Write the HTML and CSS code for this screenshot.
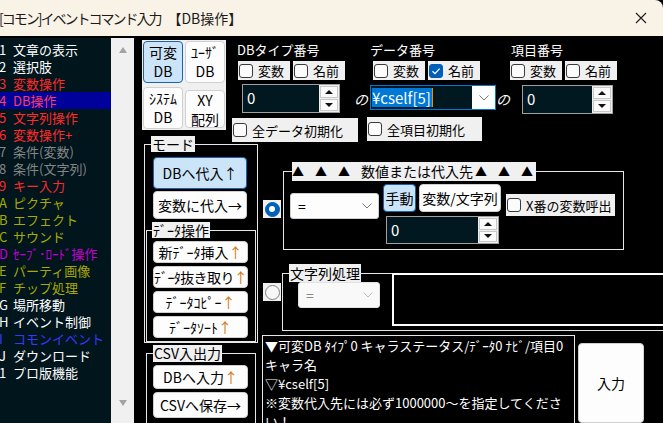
FILE: index.html
```html
<!DOCTYPE html>
<html lang="ja">
<head>
  <meta charset="UTF-8" />
  <title>[コモン]イベントコマンド入力 【DB操作】</title>
  <link rel="stylesheet" href="styles.css">
</head>
<body>

  <!-- title bar -->
  <div class="titlebar">
    <span class="title"><span class="title-main">[コモン]イベントコマンド入力</span>　【DB操作】</span>
    <svg class="close" viewBox="0 0 12 12"><path d="M1 1L11 11M11 1L1 11" stroke="#1b1b1b" stroke-width="1.1" fill="none"/></svg>
  </div>

  <div class="main">

    <!-- command list -->
    <div class="cmdlist">
      <ul class="list">
        <li class="c-white"><span class="num">1</span>文章の表示</li>
        <li class="c-white"><span class="num">2</span>選択肢</li>
        <li class="c-red"><span class="num">3</span>変数操作</li>
        <li class="c-sel"><span class="num">4</span>DB操作</li>
        <li class="c-red"><span class="num">5</span>文字列操作</li>
        <li class="c-red"><span class="num">6</span>変数操作+</li>
        <li class="c-gray"><span class="num">7</span>条件(変数)</li>
        <li class="c-gray"><span class="num">8</span>条件(文字列)</li>
        <li class="c-red"><span class="num">9</span>キー入力</li>
        <li class="c-olive"><span class="num">A</span>ピクチャ</li>
        <li class="c-olive"><span class="num">B</span>エフェクト</li>
        <li class="c-olive"><span class="num">C</span>サウンド</li>
        <li class="c-purple"><span class="num">D</span>ｾｰﾌﾞ･ﾛｰﾄﾞ操作</li>
        <li class="c-olive"><span class="num">E</span>パーティ画像</li>
        <li class="c-olive"><span class="num">F</span>チップ処理</li>
        <li class="c-white"><span class="num">G</span>場所移動</li>
        <li class="c-white"><span class="num">H</span>イベント制御</li>
        <li class="c-blue"><span class="num">I</span>コモンイベント</li>
        <li class="c-white"><span class="num">J</span>ダウンロード</li>
        <li class="c-white"><span class="num">1</span>プロ版機能</li>
      </ul>
      <div class="scroll">
        <span class="arr up"></span>
        <span class="arr down"></span>
      </div>
    </div>

    <div class="form">

      <div class="toprow">
        <div class="dbsel">
          <button class="btn on">可変<br>DB</button>
          <button class="btn">ﾕｰｻﾞ<br>DB</button>
          <button class="btn">ｼｽﾃﾑ<br>DB</button>
          <button class="btn xy">XY<br>配列</button>
        </div>

        <div class="params">
          <div class="lbl c1">DBタイプ番号</div>
          <div class="lbl c2">データ番号</div>
          <div class="lbl c3">項目番号</div>

          <div class="chks c1">
            <span class="chk"><span class="box"></span>変数</span>
            <span class="chk"><span class="box"></span>名前</span>
          </div>
          <div class="chks c2">
            <span class="chk"><span class="box"></span>変数</span>
            <span class="chk"><span class="box on"><svg viewBox="0 0 12 12"><path d="M2.5 6.2L5 8.6L9.6 3.6" stroke="#fff" stroke-width="1.3" fill="none"/></svg></span>名前</span>
          </div>
          <div class="chks c3">
            <span class="chk"><span class="box"></span>変数</span>
            <span class="chk"><span class="box"></span>名前</span>
          </div>

          <div class="spin spin-type c1">
            <span class="val">0</span>
            <span class="sbtns"><span class="sb"><i class="t-up"></i></span><span class="sb"><i class="t-down"></i></span></span>
          </div>
          <div class="no no1">の</div>
          <div class="combo focus c2">
            <span class="ctext"><span class="hl">¥cself[5]</span><span class="caret"></span></span>
            <span class="cdrop"><svg viewBox="0 0 10 6"><path d="M0.5 0.5L5 5L9.5 0.5" stroke="#777" fill="none"/></svg></span>
          </div>
          <div class="no no2">の</div>
          <div class="spin spin-item c3">
            <span class="val">0</span>
            <span class="sbtns"><span class="sb"><i class="t-up"></i></span><span class="sb"><i class="t-down"></i></span></span>
          </div>

          <span class="chk init init-data c1"><span class="box"></span>全データ初期化</span>
          <span class="chk init init-item c2"><span class="box"></span>全項目初期化</span>
        </div>
      </div>

      <div class="botrow">

        <div class="modes">
          <fieldset class="grp mode">
            <legend class="glbl">モード</legend>
            <button class="btn mbtn b1 on">DBへ代入↑</button>
            <button class="btn mbtn b2">変数に代入→</button>
            <fieldset class="grp sub">
              <legend class="glbl">ﾃﾞｰﾀ操作</legend>
              <button class="btn dbtn">新ﾃﾞｰﾀ挿入<span class="ar">↑</span></button>
              <button class="btn dbtn tight">ﾃﾞｰﾀ抜き取り<span class="ar">↑</span></button>
              <button class="btn dbtn">ﾃﾞｰﾀｺﾋﾟｰ<span class="ar">↑</span></button>
              <button class="btn dbtn">ﾃﾞｰﾀｿｰﾄ<span class="ar">↑</span></button>
            </fieldset>
          </fieldset>
          <fieldset class="grp csv">
            <legend class="glbl">CSV入出力</legend>
            <button class="btn dbtn csv1">DBへ入力<span class="ar">↑</span></button>
            <button class="btn dbtn csv2">CSVへ保存→</button>
          </fieldset>
        </div>

        <div class="work">
          <div class="opt">
            <span class="radio r1"><span class="rdot on"></span></span>
            <fieldset class="grp num">
              <legend class="glbl tlbl"><span class="tri">▲</span><span class="tri">▲</span><span class="tri">▲</span>数値または代入先<span class="tri r first">▲</span><span class="tri r">▲</span><span class="tri r">▲</span></legend>
              <div class="numbody">
                <div class="combo eq">
                  <span class="eqtext">=</span>
                  <span class="cdrop"><svg viewBox="0 0 10 6"><path d="M0.5 0.5L5 5L9.5 0.5" stroke="#777" fill="none"/></svg></span>
                </div>
                <div class="mid">
                  <div class="mbtns">
                    <button class="btn on manual">手動</button>
                    <button class="btn varstr">変数/文字列</button>
                  </div>
                  <div class="spin spin-num">
                    <span class="val">0</span>
                    <span class="sbtns"><span class="sb"><i class="t-up"></i></span><span class="sb"><i class="t-down"></i></span></span>
                  </div>
                </div>
                <span class="chk xcall"><span class="box"></span>X番の変数呼出</span>
              </div>
            </fieldset>
          </div>

          <div class="opt opt2">
            <span class="radio r2"><span class="rdot"></span></span>
            <fieldset class="grp str">
              <legend class="glbl">文字列処理</legend>
              <div class="strbody">
                <div class="combo eq off">
                  <span class="eqtext">=</span>
                  <span class="cdrop"><svg viewBox="0 0 10 6"><path d="M0.5 0.5L5 5L9.5 0.5" stroke="#bbb" fill="none"/></svg></span>
                </div>
                <div class="strbox"></div>
              </div>
            </fieldset>
          </div>

          <div class="msgrow">
            <div class="msg">
              ▼可変DB ﾀｲﾌﾟ0 キャラステータス/ﾃﾞｰﾀ0 ﾅﾋﾞ/項目0<br>
              キャラ名<br>
              ▽¥cself[5]<br>
              ※変数代入先には必ず1000000～を指定してくださ<br>
              い！
            </div>
            <button class="btn enter">入力</button>
          </div>
        </div>

      </div>
    </div>
  </div>

</body>
</html>
```

FILE: styles.css
```css
* { box-sizing: border-box; }

body {
  margin: 0;
  width: 663px;
  height: 423px;
  overflow: hidden;
  background: #000;
  color: #fff;
  font-family: "Noto Sans CJK JP", "Noto Sans", sans-serif;
  font-size: 14px;
}

/* ---- title bar ---- */
.titlebar {
  height: 36px;
  background: #f9f2e7;
  color: #1b1b1b;
  display: flex;
  align-items: center;
  justify-content: space-between;
  padding-right: 16px;
  border-top-right-radius: 8px;
}
.title { font-size: 14px; margin-left: -1px; white-space: nowrap; }
.title-main { letter-spacing: -2px; }
.close { width: 12px; height: 12px; }

.main { display: flex; height: 387px; }

/* ---- command list ---- */
.cmdlist { display: flex; width: 134px; flex: none; padding-top: 2px; }

.list {
  width: 111px;
  margin: 0;
  padding: 3px 0 0;
  list-style: none;
  background: #01151d;
  font-size: 13px;
  line-height: 17px;
  overflow: hidden;
}
.list li { white-space: nowrap; text-indent: -3px; }
.list .num { display: inline-block; width: 14px; text-indent: 0; }

.c-white { color: #ffffff; }
.c-red { color: #ff2a2a; }
.c-sel { color: #ff3a66; background: #00009a; }
.c-gray { color: #858585; }
.c-olive { color: #a9aa00; }
.c-purple { color: #c400d2; }
.c-blue { color: #3838ff; }

.scroll {
  width: 23px;
  background: #f0f0f0;
  display: flex;
  flex-direction: column;
  justify-content: space-between;
  align-items: center;
  padding: 9px 0 17px;
}
.arr { width: 0; height: 0; border-left: 4.5px solid transparent; border-right: 4.5px solid transparent; }
.arr.up { border-bottom: 6px solid #a3a3a3; }
.arr.down { border-top: 6px solid #a3a3a3; }

/* ---- common controls ---- */
.btn {
  font: inherit;
  color: #000;
  background: #fdfdfd;
  border: 1px solid #d0d0d0;
  border-radius: 4px;
  padding: 0;
  line-height: 18px;
  cursor: default;
}
.btn.on { background: #cce4f7; border-color: #1a62b0; }

.chk {
  display: flex;
  align-items: center;
  gap: 5px;
  height: 19px;
  background: #f0f0f0;
  color: #000;
  font-size: 13px;
  padding: 0 6px 0 1px;
  white-space: nowrap;
}
.box {
  width: 14px;
  height: 14px;
  flex: none;
  border: 1px solid #3a3a3a;
  border-radius: 3px;
  background: #fbfbfb;
}
.box.on { background: #005fb8; border-color: #005fb8; }
.box svg { display: block; width: 12px; height: 12px; }

.spin {
  display: flex;
  border: 1px solid #a0a0a0;
  background: #f0f0f0;
}
.spin .val {
  flex: 1;
  background: #011820;
  color: #fff;
  font-size: 15px;
  line-height: 26px;
  padding-left: 4px;
}
.sbtns { width: 20px; display: flex; flex-direction: column; gap: 1px; padding: 1px; }
.sb {
  flex: 1;
  background: #fbfbfb;
  border: 1px solid #c8c8c8;
  display: flex;
  align-items: center;
  justify-content: center;
}
.t-up, .t-down { width: 0; height: 0; border-left: 4px solid transparent; border-right: 4px solid transparent; }
.t-up { border-bottom: 4px solid #111; }
.t-down { border-top: 4px solid #111; }

.combo { display: flex; background: #fdfdfd; }
.cdrop { width: 23px; display: flex; align-items: center; justify-content: center; }
.cdrop svg { width: 10px; height: 6px; }

/* ---- top row ---- */
.toprow { display: flex; height: 106px; padding-left: 8px; }

.dbsel {
  margin-top: 4px;
  width: 84px;
  height: 90px;
  background: #f0f0f0;
  padding: 1px;
  display: grid;
  grid-template-columns: 40px 40px;
  grid-template-rows: 42px 42px;
  column-gap: 2px;
  row-gap: 4px;
}
.dbsel .btn { font-size: 14px; line-height: 19px; }
.dbsel .xy { height: 38px; align-self: center; margin-top: 2px; }

.params {
  margin-left: 6px;
  padding-top: 4px;
  display: grid;
  grid-template-columns: 122px 14px 128px 14px 116px;
  grid-template-rows: 20px 21px 33px 28px;
  align-items: start;
}
.c1 { grid-column: 1; }
.c2 { grid-column: 3; }
.c3 { grid-column: 5; }
.no1 { grid-column: 2; }
.no2 { grid-column: 4; }

.lbl { font-size: 13px; line-height: 20px; white-space: nowrap; }
.lbl.c1 { padding-left: 5px; }
.lbl.c2 { padding-left: 2px; }
.lbl.c3 { padding-left: 1px; }

.chks { display: flex; gap: 3px; margin-top: 1px; }
.chks.c1 { margin-left: 6px; }
.chks.c2 { margin-left: 5px; }

.spin-type { margin: 3px 0 0 10px; width: 98px; height: 29px; }
.spin-item { margin: 4px 0 0 12px; width: 91px; height: 29px; }

.no { font-size: 14px; text-align: center; line-height: 33px; padding-top: 2px; font-style: italic; }

.combo.focus { margin: 4px 0 0 2px; width: 126px; height: 25px; border: 1px solid #0078d4; }
.ctext { flex: 1; background: #011820; display: flex; align-items: center; padding-left: 1px; }
.hl { background: #0078d7; color: #fff; font-size: 15px; line-height: 19px; padding-right: 1px; }
.caret { width: 1px; height: 19px; background: #ff8a00; }

.chk.init { height: 24px; }
.init-data { margin-top: 4px; width: 126px; }
.init-item { margin: 3px 0 0 -1px; width: 115px; height: 22px; }

/* ---- group boxes ---- */
.grp { margin: 0; padding: 0; min-width: 0; border: 1px solid #e6e6e6; }
.glbl {
  background: #f0f0f0;
  color: #000;
  padding: 0 1px;
  font-size: 14px;
  line-height: 16px;
  white-space: nowrap;
}

.botrow { display: flex; margin-top: -6px; padding-left: 8px; }

.modes { width: 116px; flex: none; }
.mode { margin-left: 2px; width: 114px; }
.mode > .glbl { margin-left: 6px; }
.mbtn { display: block; width: 94px; margin-left: 8px; }
.b1 { height: 32px; margin-top: 5px; }
.b2 { height: 28px; margin-top: 2px; }

.sub { margin: 3px 0 0 1px; width: 110px; padding-bottom: 3px; }
.sub > .glbl { margin-left: 5px; }
.dbtn { display: block; width: 95px; height: 22px; margin: 3px 0 0 6px; white-space: nowrap; }
.dbtn .ar { color: #d07a10; }
.tight { letter-spacing: -0.6px; }

.csv { margin: 2px 0 0 4px; width: 110px; height: 100px; }
.csv > .glbl { margin-left: 6px; line-height: 17px; }
.csv1 { height: 24px; }
.csv2 { height: 26px; }

/* ---- right work area ---- */
.work { flex: 1; margin-top: 26px; display: flex; flex-direction: column; }
.opt { display: flex; align-items: flex-start; }

.radio {
  width: 18px;
  height: 18px;
  flex: none;
  margin-left: 5px;
  background: #f0f0f0;
  display: flex;
  align-items: center;
  justify-content: center;
}
.r1 { margin-top: 38px; }
.r2 { margin-top: 19px; }
.rdot {
  width: 15px;
  height: 15px;
  border-radius: 50%;
  border: 1px solid #808080;
  background: #f7f7f7;
  display: flex;
  align-items: center;
  justify-content: center;
}
.rdot.on { background: #005fb8; border-color: #005fb8; }
.rdot.on::after { content: ""; width: 6px; height: 6px; border-radius: 50%; background: #fff; }

.num { margin-left: 2px; width: 341px; }
.tlbl { margin-left: 8px; line-height: 19px; padding: 0 3px 0 0; }
.tri { display: inline-block; width: 12px; margin-right: 11px; font-size: 12px; }
.tri.r { margin: 0 0 0 11px; }
.tri.r.first { margin-left: 2px; }

.numbody { display: flex; align-items: flex-start; padding: 0 0 5px 6px; }
.combo.eq { margin-top: 12px; width: 89px; height: 26px; border: 1px solid #d0d0d0; border-radius: 3px; }
.eqtext { flex: 1; color: #000; font-size: 14px; line-height: 24px; padding-left: 7px; }
.mid { margin-left: 4px; }
.mbtns { display: flex; gap: 3px; margin-top: 3px; }
.manual { width: 33px; height: 28px; }
.varstr { width: 82px; height: 28px; }
.spin-num { margin: 4px 0 0 3px; width: 113px; height: 28px; }
.xcall { margin: 13px 0 0 5px; height: 22px; width: 109px; }

.opt2 { margin-top: 14px; }
.str { margin-left: 1px; width: 420px; }
.str > .glbl { margin-left: 6px; line-height: 18px; }
.strbody { display: flex; align-items: flex-start; padding-bottom: 4px; }
.combo.eq.off { margin: 0 0 0 15px; width: 82px; background: #f9f9f9; border-color: #e2e2e2; }
.off .eqtext { color: #8a8a8a; }
.strbox { margin: -9px 0 0 12px; width: 300px; height: 53px; border: 2px solid #fff; background: #000; }

.msgrow { display: flex; align-items: flex-start; margin-top: 4px; }
.msg {
  margin-left: 4px;
  width: 313px;
  height: 90px;
  border: 1px solid #e6e6e6;
  font-size: 13px;
  line-height: 19px;
  padding-left: 2px;
  white-space: nowrap;
  overflow: hidden;
}
.enter { margin: 8px 0 0 3px; width: 66px; height: 80px; font-size: 14px; }
```
